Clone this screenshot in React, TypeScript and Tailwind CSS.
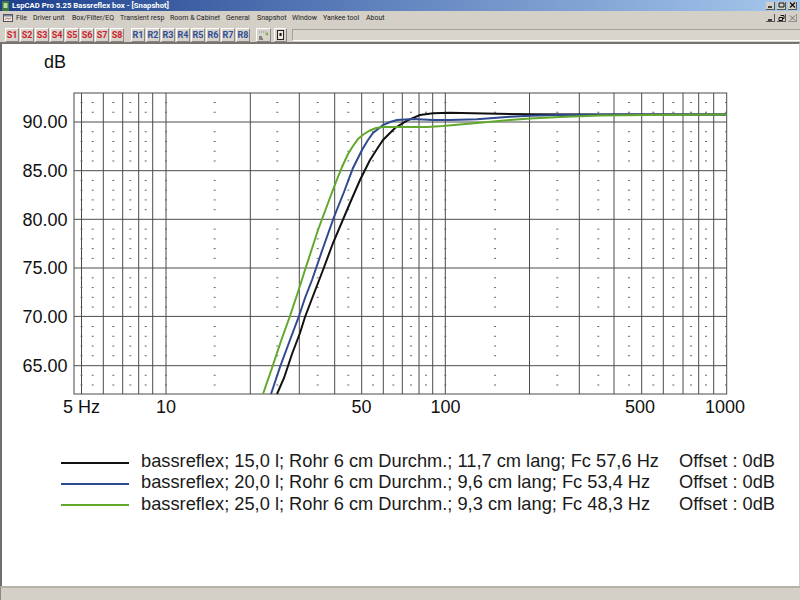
import React from "react";

const sans = "font-['Roboto',sans-serif]";
const menu = [
  ["File", "w-[17px]"],
  ["Driver unit", "w-[39px]"],
  ["Box/Filter/EQ", "w-[48px]"],
  ["Transient resp", "w-[50px]"],
  ["Room & Cabinet", "w-[56px]"],
  ["General", "w-[31px]"],
  ["Snapshot", "w-[35px]"],
  ["Window", "w-[31px]"],
  ["Yankee tool", "w-[43px]"],
  ["About", "w-[30px]"],
];

const hLines = [122, 170.7, 219.3, 268, 316.4, 365.7];
const vLines = [81.5, 103.3, 122.7, 138.7, 152.7, 166, 250.3, 299.3, 334.7, 361.7, 383.3, 402.3, 419, 432.7, 445.3, 529.5, 579.3, 614, 641.7, 663.3, 683, 698.7, 713.7];
const dashX = [81.5, 92.7, 113.3, 130.3, 145.7, 166, 214.7, 277.3, 317.7, 348.3, 373, 393.3, 411, 426, 445.3, 495, 557.3, 598.3, 629, 653.3, 673.3, 691, 706, 726];
const dashY: number[] = [];
for (let i = -2; i <= 27; i++) {
  if (i % 5 !== 0) dashY.push(122 + i * 9.74);
}

const green = "263,394 272,368 281,341 290,316 298,292 305,270 318,230 334,187 342,167 348,154 353,146 358,139 364,134 370,130.5 376,128 383,127 403,127 427,127 443,126 477,123 510,120 530,118.5 560,117 600,115.5 650,115 727,114.5";
const blue = "271,394 280,367 290,340 299,316 305,298 312,280 323,248 334,217 344,192 353,168 362,150 368,140 373,133 383,125 390,122 397,120 413,119 433,120 450,120 477,119.3 510,116.7 530,115.7 560,115 620,114.5 727,114.5";
const black = "277,394 284,378 292,354 300,333 305,317 313,296 323,270 333,243 350,203 360,180 370,160 377,149 383,140 395,128 407,120.7 420,115 433,113.3 450,112.7 473,113.3 530,114.3 600,114.5 727,114.5";

const legend = [
  ["#101010", "bassreflex; 15,0 l; Rohr 6 cm Durchm.; 11,7 cm lang; Fc 57,6 Hz"],
  ["#2f4a8e", "bassreflex; 20,0 l; Rohr 6 cm Durchm.; 9,6 cm lang; Fc 53,4 Hz"],
  ["#62a82c", "bassreflex; 25,0 l; Rohr 6 cm Durchm.; 9,3 cm lang; Fc 48,3 Hz"],
];

function WinBtn({ children, dim }: { children: React.ReactNode; dim?: boolean }) {
  return (
    <div className={`w-[9px] h-[8px] bg-[#d4d0c8] border-r border-b border-[#555] flex items-center justify-center ${dim ? "opacity-50" : ""}`}>
      <svg width="7" height="6" viewBox="0 0 7 6" fill="none" stroke="#111" strokeWidth="1">
        {children}
      </svg>
    </div>
  );
}

function ToolBtn({ label, color }: { label: string; color: string }) {
  return (
    <div
      className={`w-[14px] h-[14px] bg-[#d8d4cc] border-t border-l border-white border-r border-b border-r-[#8a8780] border-b-[#8a8780] flex items-center justify-center text-[9px] font-bold leading-none ${color}`}
    >
      {label}
    </div>
  );
}

export default function App() {
  return (
    <div className="w-[800px] h-[600px] overflow-hidden flex flex-col bg-white">
      <div className={`h-[11px] shrink-0 flex items-center pl-[2px] pr-[3px] bg-gradient-to-r from-[#1d3f8c] via-[#6486c0] to-[#a6c8ec] ${sans}`}>
        <svg width="7" height="10" viewBox="0 0 7 10">
          <rect x="0" y="0" width="7" height="10" fill="#3f7a3a" />
          <rect x="1.5" y="2" width="4" height="5" fill="#b5dca0" />
        </svg>
        <span className="ml-[3px] text-[7.75px] font-bold text-white leading-none whitespace-nowrap">LspCAD Pro 5.25 Bassreflex box - [Snapshot]</span>
        <div className="ml-auto flex gap-[2px]">
          <WinBtn><path d="M1 5H5" strokeWidth="1.5" /></WinBtn>
          <WinBtn><path d="M1 1H6V5H1Z" /></WinBtn>
          <WinBtn><path d="M1 0.5L6 5.5M6 0.5L1 5.5" strokeWidth="1.3" /></WinBtn>
        </div>
      </div>

      <div className={`h-[15px] shrink-0 bg-[#d4d0c8] flex items-center pl-[3px] pr-[3px] pb-[1px] ${sans}`}>
        <svg width="10" height="8" viewBox="0 0 10 8" className="shrink-0">
          <rect x="0.5" y="0.5" width="9" height="7" fill="#e8e6e0" stroke="#555" />
          <rect x="1" y="1" width="8" height="1.5" fill="#7a86a8" />
          <path d="M2 5.5L4 4L6 5L8 4" stroke="#a33" strokeWidth="0.7" fill="none" />
        </svg>
        <div className="ml-[3px] flex text-[7px] text-[#222] leading-none whitespace-nowrap">
          {menu.map(([t, w]) => (
            <span key={t} className={`block ${w}`}>{t}</span>
          ))}
        </div>
        <div className="ml-auto flex gap-[2px]">
          <WinBtn><path d="M1 5H5" strokeWidth="1.5" /></WinBtn>
          <WinBtn><path d="M2.5 0.5H6V3.5H5M1 2.5H4.5V5.5H1Z" /></WinBtn>
          <WinBtn dim><path d="M1 0.5L6 5.5M6 0.5L1 5.5" /></WinBtn>
        </div>
      </div>

      <div className={`h-[16px] shrink-0 bg-[#d4d0c8] flex items-start pt-[2px] pl-[5px] ${sans}`}>
        <div className="flex gap-[1px]">
          {["S1", "S2", "S3", "S4", "S5", "S6", "S7", "S8"].map((s) => (
            <ToolBtn key={s} label={s} color="text-[#cf1f2e]" />
          ))}
        </div>
        <div className="ml-[7px] flex gap-[1px]">
          {["R1", "R2", "R3", "R4", "R5", "R6", "R7", "R8"].map((s) => (
            <ToolBtn key={s} label={s} color="text-[#2f4f96]" />
          ))}
        </div>
        <div className="ml-[6px] w-[15px] h-[14px] bg-[#d8d4cc] border-t border-l border-white border-r border-b border-r-[#8a8780] border-b-[#8a8780] flex items-center justify-center">
          <svg width="11" height="10" viewBox="0 0 11 10">
            <path d="M1 2H8" stroke="#7a86a8" strokeWidth="1" strokeDasharray="1 1" />
            <path d="M7 4L10 2V6Z" fill="#7fae45" />
            <path d="M1 7H4M1 9H5" stroke="#333" strokeWidth="1" />
          </svg>
        </div>
        <div className="ml-[3px] w-[13px] h-[14px] bg-[#d8d4cc] border-t border-l border-white border-r border-b border-r-[#8a8780] border-b-[#8a8780] flex items-center justify-center">
          <svg width="7" height="10" viewBox="0 0 7 10">
            <rect x="0.5" y="0.5" width="6" height="9" fill="#f2e8e0" stroke="#222" />
            <rect x="2.5" y="3" width="2" height="3" fill="#111" />
          </svg>
        </div>
        <div className="ml-[5px] mt-[1px] flex-1 h-[12px] border-t border-l border-[#a5a29a] border-b-white border-b bg-[#d8d5cd]" />
      </div>

      <div className="flex-1 min-h-0 flex flex-col bg-white border-l-2 border-l-[#6e6e6e] border-t-2 border-t-[#77756f] border-r border-r-[#d0cec8] font-['Liberation_Sans',sans-serif]">
        <svg viewBox="2 44 797 376" className="w-[797px] h-[376px] shrink-0">
          <rect x="74" y="93" width="652.7" height="301" fill="#fff" stroke="#4a4a4a" strokeWidth="1" />
          {hLines.map((y) => (
            <line key={y} x1="74" x2="726.7" y1={y} y2={y} stroke="#4a4a4a" strokeWidth="1" />
          ))}
          {vLines.map((x) => (
            <line key={x} x1={x} x2={x} y1="93" y2="394" stroke="#4a4a4a" strokeWidth="1" />
          ))}
          {dashX.map((x) =>
            dashY.map((y) => (
              <line key={`${x}-${y}`} x1={x - 1} x2={x + 1} y1={y} y2={y} stroke="#666" strokeWidth="1" />
            ))
          )}
          <polyline points={black} fill="none" stroke="#111" strokeWidth="2" />
          <polyline points={blue} fill="none" stroke="#2f4a8e" strokeWidth="2" />
          <polyline points={green} fill="none" stroke="#62a82c" strokeWidth="2" />

          <g fill="#111" fontSize="18">
            <text x="44" y="68">dB</text>
            {["90.00", "85.00", "80.00", "75.00", "70.00", "65.00"].map((t, i) => (
              <text key={t} x="67.5" y={128 + i * 48.75} textAnchor="end">{t}</text>
            ))}
            <text x="63" y="413">5 Hz</text>
            <text x="166" y="413" textAnchor="middle">10</text>
            <text x="361.5" y="413" textAnchor="middle">50</text>
            <text x="445.5" y="413" textAnchor="middle">100</text>
            <text x="640" y="413" textAnchor="middle">500</text>
            <text x="725" y="413" textAnchor="middle">1000</text>
          </g>
        </svg>

        <div className="mt-[30px] flex flex-col pl-[59px] text-[18.25px] text-[#1a1a1a] leading-[21.4px]">
          {legend.map(([c, t]) => (
            <div key={t} className="flex items-center h-[21.4px] whitespace-nowrap">
              <div className="w-[68px] h-[2px] mt-[4px]" style={{ backgroundColor: c }} />
              <span className="ml-[12px] w-[538px]">{t}</span>
              <span>Offset : 0dB</span>
            </div>
          ))}
        </div>
      </div>

      <div className="h-[14px] shrink-0 bg-[#d4d0c8] border-t-2 border-t-[#b5b2aa] border-l border-l-[#8a8780]" />
    </div>
  );
}
